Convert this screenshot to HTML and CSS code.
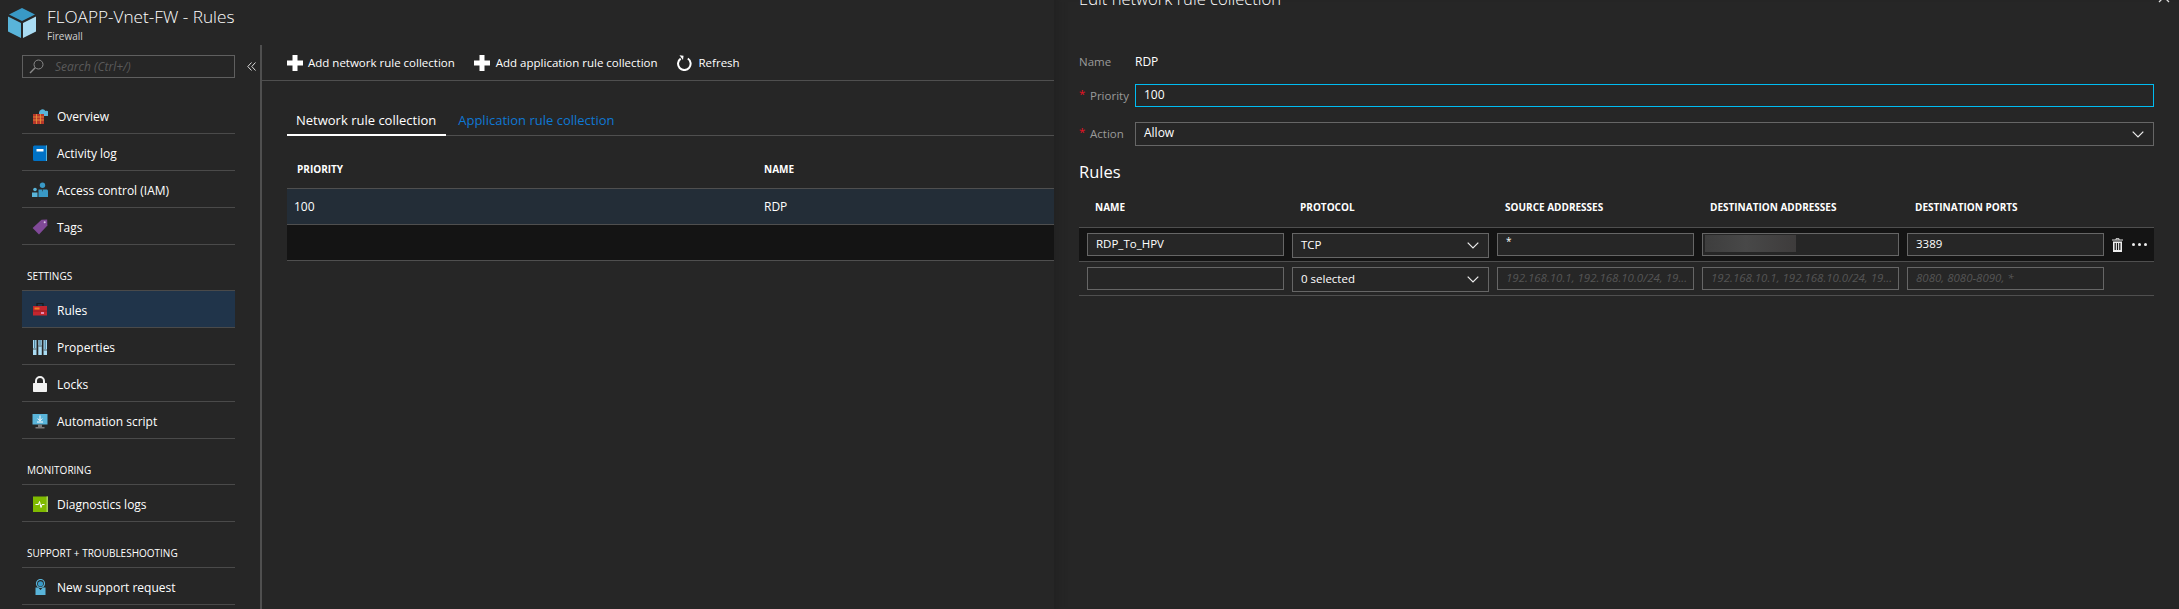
FILE: index.html
```html
<!DOCTYPE html>
<html lang="en">
<head>
<meta charset="utf-8">
<title>FLOAPP-Vnet-FW - Rules</title>
<link rel="stylesheet" href="styles.css">
</head>
<body>
<div class="app">
  <section class="blade">
    <header class="blade-head">
      <svg class="cube" viewBox="0 0 28 30"><path d="M14 0 27 6.500 14 13 1 6.500Z" fill="#3999c6"/><path d="M0 8.500 13 15V30L0 23.500Z" fill="#59b4d9"/><path d="M28 8.500 15 15V30L28 23.500Z" fill="#a9dbf2"/></svg>
      <div class="titles">
        <div class="title">FLOAPP-Vnet-FW - Rules</div>
        <div class="subtitle">Firewall</div>
      </div>
    </header>
    <div class="blade-body">
      <nav class="side">
        <div class="search-row">
          <div class="search">
            <svg class="search-icon" viewBox="0 0 15 15"><circle cx="9.500" cy="5.500" r="4.500" fill="none" stroke="#8a8a8a" stroke-width="1"/><path d="M6.200 8.800 1 14" stroke="#8a8a8a" stroke-width="1.400"/></svg>
            <span>Search (Ctrl+/)</span>
          </div>
          <svg class="collapse" viewBox="0 0 9 9"><path d="M4.500 .5 .8 4.500 4.500 8.500M8.500 .5 4.800 4.500 8.500 8.500" fill="none" stroke="#ddd" stroke-width="1"/></svg>
        </div>
        <ul class="menu">
          <li class="item"><svg class="ico" viewBox="0 0 16 16"><path d="M7 5a3.500 3.500 0 0 1 6.500-2A2.700 2.700 0 0 1 15.500 8H7Z" fill="#59b4d9"/><path d="M1 6h11v10H1Z" fill="#b8372b"/><path d="M1 9h11M1 12h11M4.500 6v10M8.500 6v10" stroke="#e8953a" stroke-width=".8"/></svg>Overview</li>
          <li class="item"><svg class="ico" viewBox="0 0 16 16"><path d="M1 2a1.500 1.500 0 0 1 1.500-1.500H15V16H2.500A1.500 1.500 0 0 1 1 14.500Z" fill="#0072c6"/><path d="M14 .5h1V16h-1Z" fill="#59b4d9"/><path d="M4.500 4h7v2.500h-7Z" fill="#fff"/></svg>Activity log</li>
          <li class="item"><svg class="ico" viewBox="0 0 16 16"><circle cx="10.500" cy="3.200" r="2.700" fill="#3999c6"/><path d="M6.500 7.500h8c.8 0 1.500.6 1.500 1.500v6H6.500Z" fill="#3999c6"/><path d="M10 7.500h1L10.500 10Z" fill="#262626"/><circle cx="3" cy="7.500" r="1.800" fill="#59b4d9"/><path d="M0 10.500h5.500V15H0Z" fill="#59b4d9"/></svg>Access control (IAM)</li>
          <li class="item"><svg class="ico" viewBox="0 0 16 16"><path d="M9.500 .8 15.200.6 15.400 6.500 7 15.400.6 8.900Z" fill="#804998"/><circle cx="12.700" cy="3.200" r="1" fill="#d9c4e6"/></svg>Tags</li>
        </ul>
        <div class="group">SETTINGS</div>
        <ul class="menu">
          <li class="item active"><svg class="ico" viewBox="0 0 16 16"><path d="M5 4V1.500h6V4" fill="none" stroke="#1a1a1a" stroke-width="1.200"/><path d="M1 4h14v9.500H1Z" fill="#c4262e"/><path d="M2.500 5.500h5v2h-5Z" fill="#ef7f24"/><path d="M1 9h14" stroke="#8f1c22" stroke-width=".8"/><path d="M9 10h3v2H9Z" fill="#e78ab0"/></svg>Rules</li>
          <li class="item"><svg class="ico" viewBox="0 0 16 16"><path d="M1 1h3.500v15H1ZM6.300 1h3.500v15H6.300ZM11.500 1H15v15h-3.500Z" fill="#a9dbf2"/><path d="M2.700 1v8M8 1v5M13.200 1v9" stroke="#3a6f8a" stroke-width="1"/><path d="M1 10h3.500M6.300 7h3.500M11.500 11H15" stroke="#4a5a62" stroke-width="1"/></svg>Properties</li>
          <li class="item"><svg class="ico" viewBox="0 0 16 16"><path d="M4 7V5a4 4 0 0 1 8 0v2" fill="none" stroke="#f2f2f2" stroke-width="2"/><path d="M1.500 7h13c.3 0 .5.2.5.500V15c0 .6-.4 1-1 1H2c-.6 0-1-.4-1-1V7.500c0-.3.2-.5.500-.5Z" fill="#f2f2f2"/></svg>Locks</li>
          <li class="item"><svg class="ico" viewBox="0 0 16 16"><path d="M.5 1h15v10.500H.5Z" fill="#59b4d9"/><path d="M8 2.500v5M5.800 5.500 8 7.800l2.200-2.300M5 9h6" fill="none" stroke="#fff" stroke-width="1"/><path d="M6 11.500h4V14H6ZM3.500 14h9v1.500h-9Z" fill="#7a7a7a"/></svg>Automation script</li>
        </ul>
        <div class="group">MONITORING</div>
        <ul class="menu">
          <li class="item"><svg class="ico" viewBox="0 0 16 16"><path d="M1 .5h15V16H1Z" fill="#7fba00"/><path d="M14.500 .5H16V16h-1.500Z" fill="#a9cf5f"/><path d="M3.500 8.500h3l1-3 1.500 6 1-3h2.500" fill="none" stroke="#fff" stroke-width="1"/></svg>Diagnostics logs</li>
        </ul>
        <div class="group">SUPPORT + TROUBLESHOOTING</div>
        <ul class="menu">
          <li class="item"><svg class="ico" viewBox="0 0 16 16"><circle cx="8.500" cy="4.500" r="4" fill="none" stroke="#59b4d9" stroke-width="1.200"/><circle cx="8.500" cy="4.800" r="2.600" fill="#3999c6"/><path d="M3.500 8.500h2.700L8.500 11l2.300-2.500h2.700V16h-10Z" fill="#59b4d9"/></svg>New support request</li>
        </ul>
      </nav>
      <main class="content">
        <div class="toolbar">
          <div class="tool"><svg class="plus" viewBox="0 0 16 16"><path d="M5.500 0h5v5.500H16v5h-5.500V16h-5v-5.500H0v-5h5.500Z" fill="#fff"/></svg>Add network rule collection</div>
          <div class="tool"><svg class="plus" viewBox="0 0 16 16"><path d="M5.500 0h5v5.500H16v5h-5.500V16h-5v-5.500H0v-5h5.500Z" fill="#fff"/></svg>Add application rule collection</div>
          <div class="tool"><svg class="refresh" viewBox="0 0 15 16"><path d="M10.800 3.500A6.300 6.300 0 1 1 3.700 3.600" fill="none" stroke="#fff" stroke-width="2"/><path d="M2.500 .3 6.500 .8 6 5Z" fill="#fff"/></svg>Refresh</div>
        </div>
        <div class="tabs">
          <div class="tab on">Network rule collection</div>
          <div class="tab link">Application rule collection</div>
        </div>
        <div class="grid-head"><span>PRIORITY</span><span>NAME</span></div>
        <div class="grid-row sel"><span>100</span><span>RDP</span></div>
        <div class="grid-row blank"></div>
      </main>
    </div>
  </section>
  <aside class="panel">
    <h2 class="panel-title">Edit network rule collection</h2>
    <svg class="close" viewBox="0 0 12 12"><path d="M1 1 11 11M11 1 1 11" stroke="#ddd" stroke-width="1.300"/></svg>
    <div class="field name"><label class="lab">Name</label><div class="val">RDP</div></div>
    <div class="field prio"><label class="lab"><i>*</i>Priority</label><div class="box focus">100</div></div>
    <div class="field act"><label class="lab"><i>*</i>Action</label><div class="box select"><span class="lift">Allow</span><svg class="chev" viewBox="0 0 12 7"><path d="M.7.7 6 6 11.300.7" fill="none" stroke="#eee" stroke-width="1.200"/></svg></div></div>
    <h3 class="rules">Rules</h3>
    <div class="r-head"><span>NAME</span><span>PROTOCOL</span><span>SOURCE ADDRESSES</span><span>DESTINATION ADDRESSES</span><span>DESTINATION PORTS</span></div>
    <div class="r-row dark">
      <div class="cell">RDP_To_HPV</div>
      <div class="cell sel-cell"><span class="lift">TCP</span><svg class="chev" viewBox="0 0 12 7"><path d="M.7.7 6 6 11.300.7" fill="none" stroke="#eee" stroke-width="1.200"/></svg></div>
      <div class="cell star">*</div>
      <div class="cell redacted"><div class="blur"></div></div>
      <div class="cell">3389</div>
      <div class="acts">
        <svg class="trash" viewBox="0 0 11 14"><path d="M0 2h11M4 2V.7h3V2" fill="none" stroke="#ddd" stroke-width="1"/><path d="M1 3.500h9V14H1Z" fill="#eee"/><path d="M3.200 5v7M5.500 5v7M7.800 5v7" stroke="#141414" stroke-width="1.200"/></svg>
        <div class="dots"><b></b><b></b><b></b></div>
      </div>
    </div>
    <div class="r-row">
      <div class="cell"></div>
      <div class="cell sel-cell"><span class="lift">0 selected</span><svg class="chev" viewBox="0 0 12 7"><path d="M.7.7 6 6 11.300.7" fill="none" stroke="#eee" stroke-width="1.200"/></svg></div>
      <div class="cell ph">192.168.10.1, 192.168.10.0/24, 19...</div>
      <div class="cell ph">192.168.10.1, 192.168.10.0/24, 19...</div>
      <div class="cell ph">8080, 8080-8090, *</div>
    </div>
  </aside>
</div>
</body>
</html>
```
FILE: styles.css
```css
* { box-sizing: border-box; }
html, body { margin: 0; padding: 0; }
body { background: #262626; color: #fff; font-family: "Open Sans", "Noto Sans", sans-serif; font-size: 12px; }
.app { display: flex; width: 2179px; height: 609px; overflow: hidden; background: #262626; }
ul { list-style: none; margin: 0; padding: 0; }

.blade { width: 1054px; flex: none; display: flex; flex-direction: column; overflow: hidden; }
.blade-head { height: 45px; flex: none; display: flex; padding: 8px 0 0 8px; gap: 11px; }
.cube { width: 28px; height: 30px; flex: none; }
.titles { margin-top: -3px; }
.title { font-size: 17.2px; font-weight: 300; line-height: 24px; white-space: nowrap; }
.subtitle { font-size: 10px; line-height: 14px; color: #d0d0d0; }
.blade-body { flex: 1; display: flex; min-height: 0; }

.side { width: 260px; flex: none; padding: 10px 0 0 22px; }
.search-row { display: flex; align-items: center; height: 23px; margin-bottom: 19px; }
.search { width: 213px; height: 23px; border: 1px solid #5f5f5f; display: flex; align-items: center; padding-left: 6px; gap: 11px; color: #5a5a5a; font-style: italic; }
.search-icon { width: 15px; height: 15px; }
.collapse { width: 9px; height: 9px; margin-left: 12px; }
.menu { width: 213px; }
.item { height: 37px; display: flex; align-items: center; padding: 2px 0 0 10px; gap: 9px; border-bottom: 1px solid #4a4a4a; white-space: nowrap; }
.item.active { background: #20344a; }
.ico { width: 16px; height: 16px; flex: none; }
.group { width: 213px; height: 46px; padding: 23px 0 0 5px; font-size: 10px; line-height: 16px; border-bottom: 1px solid #4a4a4a; white-space: nowrap; }

.content { flex: 1; min-width: 0; border-left: 2px solid #4f4f4f; }
.toolbar { height: 36px; border-bottom: 1px solid #4f4f4f; display: flex; align-items: center; padding: 0 0 0 25px; gap: 19px; font-size: 11.5px; }
.tool { display: flex; align-items: center; gap: 5px; white-space: nowrap; }
.tool + .tool { gap: 6px; }
.plus { width: 16px; height: 16px; }
.refresh { width: 15px; height: 16px; margin-right: 1px; }
.tabs { margin: 30px 0 0 25px; height: 25px; display: flex; border-bottom: 1px solid #4f4f4f; font-size: 13px; }
.tab { height: 25px; line-height: 18px; padding: 0 10px 0 9px; white-space: nowrap; }
.tab.on { border-bottom: 2px solid #fff; }
.tab.link { color: #0f78d4; margin-left: 3px; }
.grid-head, .grid-row { margin-left: 25px; display: grid; border-bottom: 1px solid #4f4f4f; }
.grid-head { height: 53px; padding: 25px 0 0 10px; grid-template-columns: 467px 1fr; font-size: 10px; font-weight: 700; line-height: 16px; }
.grid-row { height: 36px; padding-left: 7px; grid-template-columns: 470px 1fr; line-height: 36px; }
.grid-row.sel { background: #232d37; }
.grid-row.blank { background: #141414; }

.panel { flex: 1; min-width: 0; position: relative; padding: 0 25px; box-shadow: inset 12px 0 12px -12px #1f1f1f; }
.panel-title { margin: -13px 0 0; height: 22px; font-size: 16.6px; font-weight: 300; line-height: 24px; }
.close { position: absolute; left: 1104px; top: -9px; width: 12px; height: 12px; }
.field { display: grid; grid-template-columns: 56px 1fr; align-items: center; }
.name { margin-top: 42px; height: 20px; }
.prio { margin-top: 13px; }
.act { margin-top: 15px; }
.act .lab { padding-bottom: 2px; }
.lab { color: #9a9a9a; white-space: nowrap; font-size: 11.5px; }
.lab i { color: #e81123; font-style: normal; display: inline-block; width: 11px; position: relative; top: -2px; }
.box { height: 24px; border: 1px solid #666; line-height: 20px; padding-left: 8px; }
.box.focus { height: 23px; border-color: #00bcf2; }
.select { display: flex; justify-content: space-between; align-items: center; padding-right: 9px; }
.lift { padding-bottom: 2px; }
.chev { width: 12px; height: 7px; }
.rules { margin: 14px 0 0; height: 24px; font-size: 16.5px; font-weight: 400; line-height: 24px; }
.r-head { margin-top: 12px; height: 32px; padding: 3px 0 0 16px; display: flex; font-size: 10px; font-weight: 700; line-height: 16px; border-bottom: 1px solid #4f4f4f; }
.r-head span { width: 205px; flex: none; white-space: nowrap; }
.r-row { height: 34px; padding: 5px 0 0 8px; display: flex; gap: 8px; align-items: flex-start; border-bottom: 1px solid #4f4f4f; font-size: 11.5px; }
.r-row.dark { background: #141414; }
.cell { width: 197px; flex: none; height: 23px; background: #262626; border: 1px solid #666; padding-left: 8px; line-height: 19px; white-space: nowrap; overflow: hidden; }
.sel-cell { height: 25px; display: flex; justify-content: space-between; align-items: center; padding-right: 9px; line-height: 21px; }
.star { font-size: 10px; line-height: 15px; }
.redacted { padding: 1px; }
.blur { width: 91px; height: 17px; background: linear-gradient(90deg, #3e3e3e, #484848 45%, #3e3c3c); margin-left: 1px; }
.ph { color: #555; font-style: italic; }
.acts { display: flex; align-items: center; gap: 9px; height: 24px; }
.trash { width: 11px; height: 14px; }
.dots { display: flex; gap: 3px; margin-top: -2px; }
.dots b { width: 3px; height: 3px; border-radius: 50%; background: #eee; }
```
